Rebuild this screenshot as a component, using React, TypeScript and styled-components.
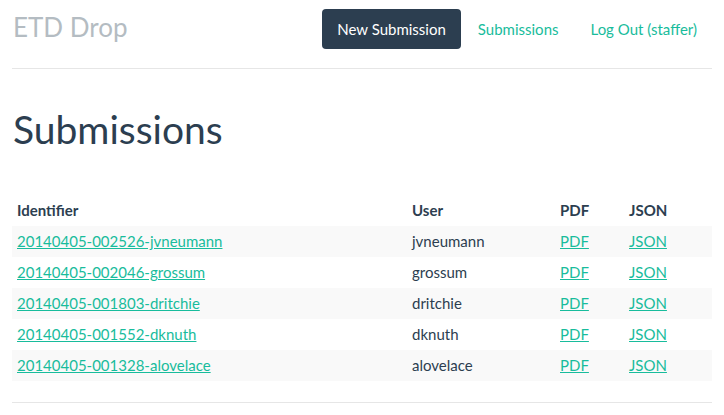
import React from "react";
import styled, { createGlobalStyle } from "styled-components";

const GlobalStyle = createGlobalStyle`
  html, body { margin: 0; padding: 0; background: #ffffff; }
  body {
    font-family: Lato, "Open Sans", "Liberation Sans", sans-serif;
    font-size: 15px;
    line-height: 21px;
    color: #2c3e50;
  }
  * { box-sizing: border-box; }
`;

const Container = styled.div`
  padding: 0 12px;
`;

const Header = styled.header`
  display: flex;
  justify-content: space-between;
  align-items: flex-start;
  padding-top: 9px;
  padding-bottom: 19px;
  border-bottom: 1px solid #e6e6e6;
`;

const Brand = styled.h3`
  margin: 0;
  padding-left: 1px;
  font-size: 26px;
  font-weight: 400;
  line-height: 36px;
  color: #b4bcc2;
`;

const Nav = styled.ul`
  display: flex;
  gap: 2px;
  list-style: none;
  margin: 0;
  padding: 0;
`;

const NavLink = styled.a<{ $active?: boolean }>`
  display: block;
  padding: 10px 15px;
  line-height: 20px;
  font-size: 15px;
  border-radius: 4px;
  text-decoration: none;
  color: ${(p) => (p.$active ? "#ffffff" : "#18bc9c")};
  background: ${(p) => (p.$active ? "#2c3e50" : "transparent")};
`;

const Title = styled.h1`
  margin: 39px 0 0;
  padding-left: 1px;
  font-size: 39px;
  font-weight: 400;
  line-height: 43px;
  color: #2c3e50;
`;

const Table = styled.table`
  width: 100%;
  margin: 44px 0 21px;
  border-collapse: collapse;
  border-spacing: 0;
`;

const Th = styled.th<{ $width: number }>`
  width: ${(p) => p.$width}px;
  padding: 5px;
  text-align: left;
  font-weight: 700;
  line-height: 21px;
  color: #2c3e50;
`;

const Row = styled.tr<{ $striped: boolean }>`
  background: ${(p) => (p.$striped ? "#f9f9f9" : "transparent")};
`;

const Td = styled.td`
  padding: 5px;
  line-height: 21px;
  color: #2c3e50;
`;

const Link = styled.a`
  color: #18bc9c;
  text-decoration: underline;
`;

const Rule = styled.hr`
  margin: 0;
  border: 0;
  border-top: 1px solid #e6e6e6;
`;

const rows = [
  { id: "20140405-002526-jvneumann", user: "jvneumann" },
  { id: "20140405-002046-grossum", user: "grossum" },
  { id: "20140405-001803-dritchie", user: "dritchie" },
  { id: "20140405-001552-dknuth", user: "dknuth" },
  { id: "20140405-001328-alovelace", user: "alovelace" },
];

export default function App() {
  return (
    <>
      <GlobalStyle />
      <Container>
        <Header>
          <Brand>ETD Drop</Brand>
          <Nav>
            <li>
              <NavLink href="#" $active>
                New Submission
              </NavLink>
            </li>
            <li>
              <NavLink href="#">Submissions</NavLink>
            </li>
            <li>
              <NavLink href="#">Log Out (staffer)</NavLink>
            </li>
          </Nav>
        </Header>
        <Title>Submissions</Title>
        <Table>
          <thead>
            <tr>
              <Th $width={395}>Identifier</Th>
              <Th $width={148}>User</Th>
              <Th $width={69}>PDF</Th>
              <Th $width={88}>JSON</Th>
            </tr>
          </thead>
          <tbody>
            {rows.map((r, i) => (
              <Row key={r.id} $striped={i % 2 === 0}>
                <Td>
                  <Link href="#">{r.id}</Link>
                </Td>
                <Td>{r.user}</Td>
                <Td>
                  <Link href="#">PDF</Link>
                </Td>
                <Td>
                  <Link href="#">JSON</Link>
                </Td>
              </Row>
            ))}
          </tbody>
        </Table>
        <Rule />
      </Container>
    </>
  );
}
